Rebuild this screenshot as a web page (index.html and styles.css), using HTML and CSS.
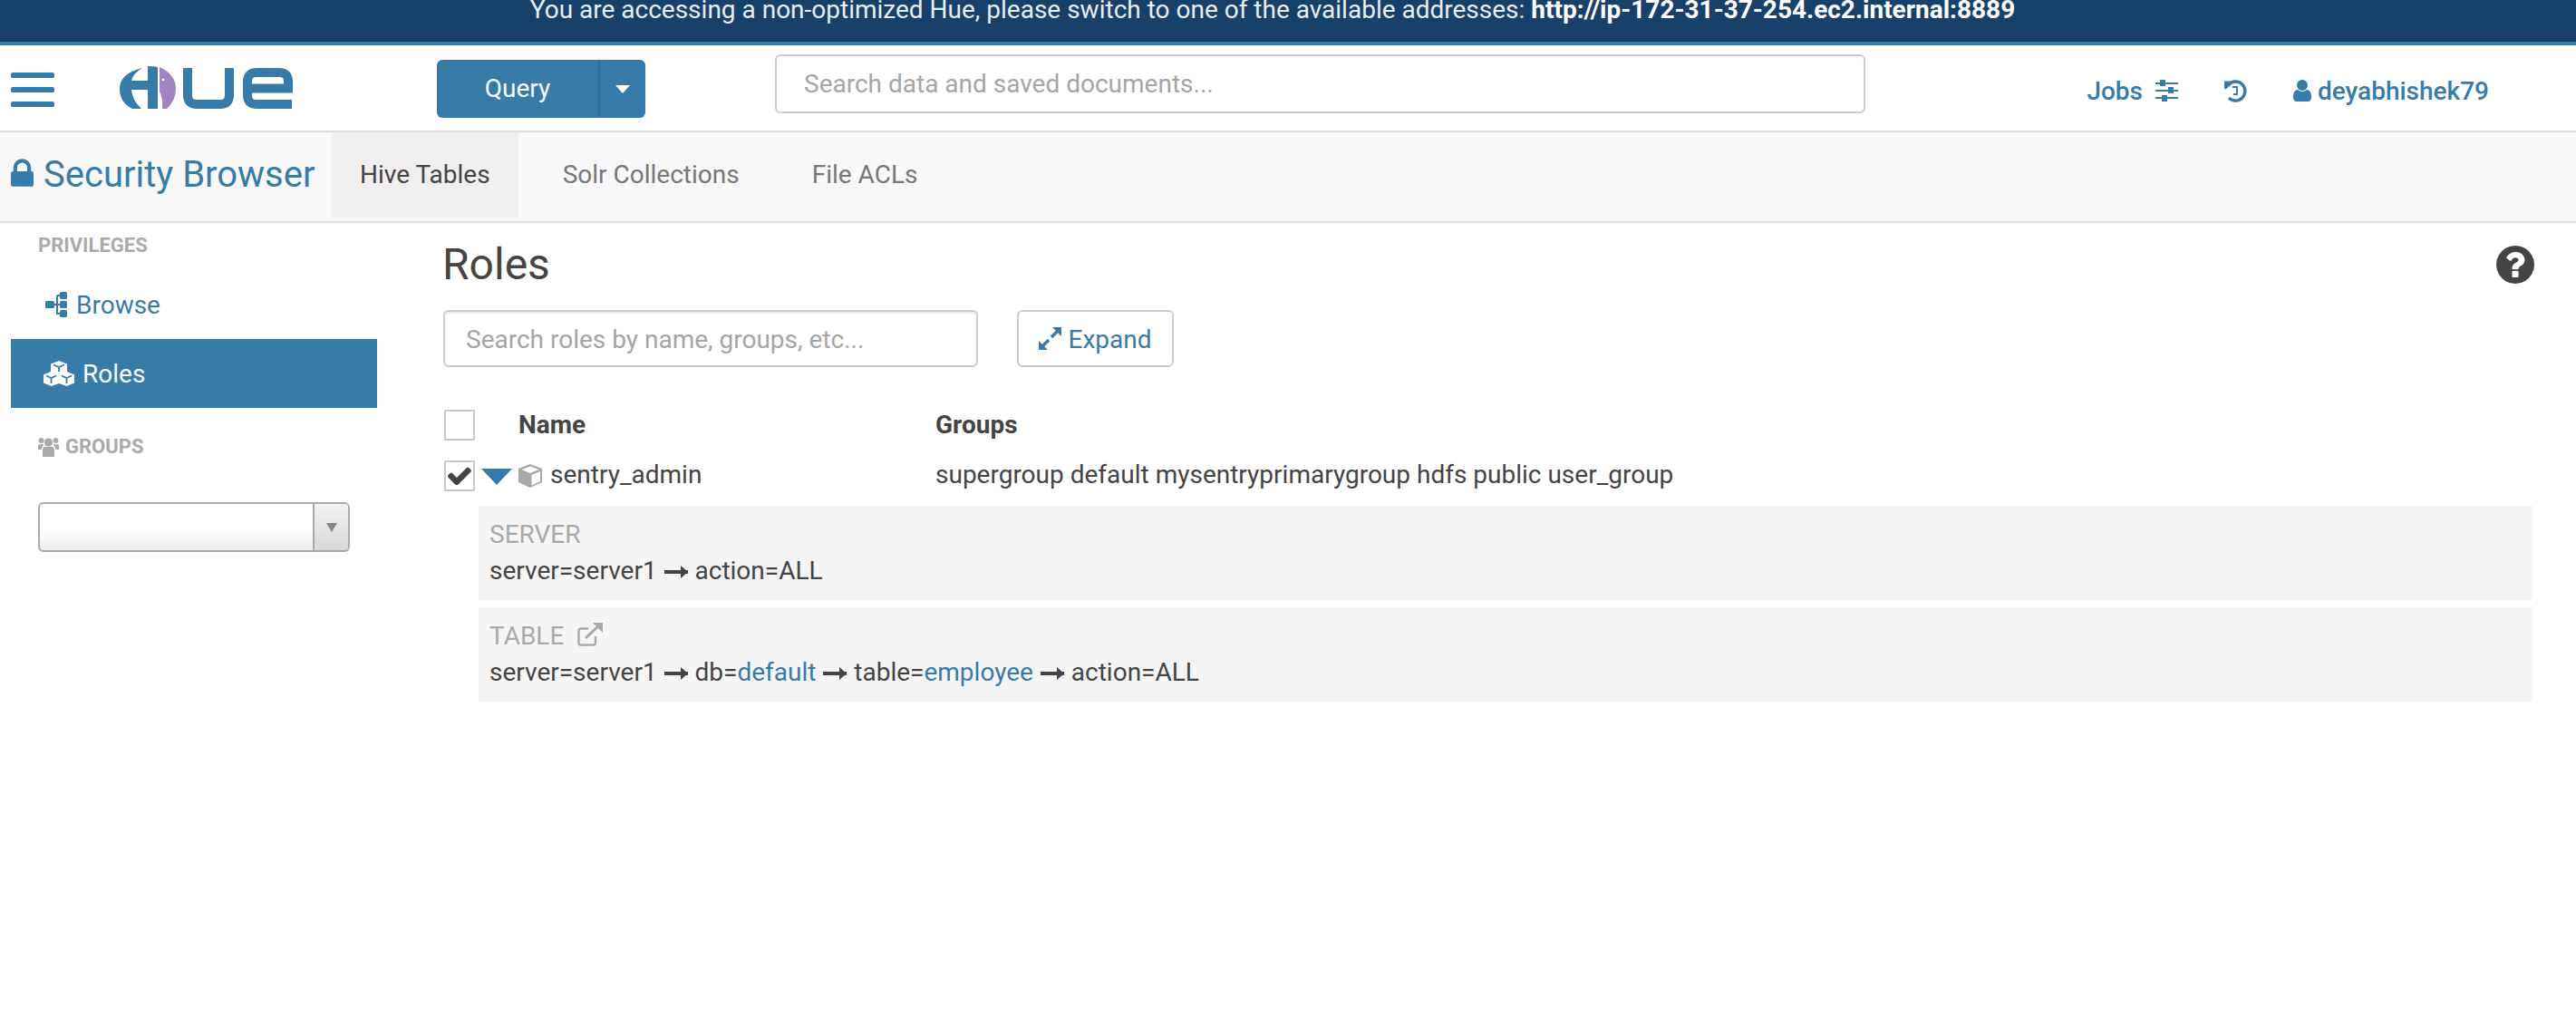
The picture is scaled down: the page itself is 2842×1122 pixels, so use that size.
FILE: index.html
```html
<!DOCTYPE html>
<html lang="en">
<head>
    <meta charset="UTF-8">
    <meta name="viewport" content="width=device-width, initial-scale=1.0">
    <title>Hue - Security Browser</title>
    <link rel="stylesheet" href="styles.css">
</head>
<body>
    <div class="banner">You are accessing a non-optimized Hue, please switch to one of the available addresses: <b>http://ip-172-31-37-254.ec2.internal:8889</b></div>

    <header class="topbar">
        <a class="burger"><span></span><span></span><span></span></a>
        <svg class="logo" viewBox="0 0 192 48">
            <path class="logo-blue" d="M25 2Q0 8 0 25Q0 40 14 47H24Q14 38 13 26H31V47H42V1Q36 0 31 0V16H13Q15 8 25 2Z"/>
            <path class="logo-purple" d="M44 1Q62 9 62 25Q62 38 52 47H47Q48 36 44 28Z"/>
            <circle class="logo-dot" cx="48" cy="15" r="1.4"/>
            <path class="logo-line" d="M75 2V32Q75 42 85 42H111Q121 42 121 32V2"/>
            <path class="logo-line" d="M136 24.5H186V17Q186 7 176 7H151Q141 7 141 17V32Q141 42 151 42H190"/>
        </svg>
        <div class="query-btn">
            <span class="query-label">Query</span>
            <span class="query-caret"><i></i></span>
        </div>
        <input class="global-search" type="text" placeholder="Search data and saved documents...">
        <div class="top-links">
            <a class="jobs">Jobs
                <svg class="ico-sliders" viewBox="0 0 25 24">
                    <path d="M0 4H25M0 12H25M0 20H25" stroke="#377ba8" stroke-width="2"/>
                    <path d="M5 0h6v7H5zM14 8h6v7h-6zM7 17h6v7H7z" fill="#377ba8"/>
                </svg>
            </a>
            <svg class="ico-history" viewBox="0 0 25 25">
                <path d="M4.5 5.5A10.5 10.500 0 1 1 5 20" fill="none" stroke="#377ba8" stroke-width="3.4"/>
                <path d="M0 1.5L9.5 1.5L9.5 3.5L2.5 10L0 10Z" fill="#377ba8"/>
                <path d="M9 8H14V16H10" fill="none" stroke="#377ba8" stroke-width="2"/>
            </svg>
            <a class="user">
                <svg class="ico-user" viewBox="256 128 1280 1536"><path d="M1536 1399q0 109-62.5 187t-150.5 78h-854q-88 0-150.5-78t-62.5-187q0-85 8.5-160.5t31.5-152 58.5-131 94-89 134.5-34.5q131 128 313 128t313-128q76 0 134.5 34.5t94 89 58.5 131 31.5 152 8.5 160.5zm-256-887q0 159-112.5 271.5t-271.5 112.5-271.5-112.5-112.5-271.5 112.5-271.5 271.5-112.5 271.5 112.5 112.5 271.5z"/></svg>
                deyabhishek79
            </a>
        </div>
    </header>

    <nav class="subnav">
        <svg class="ico-lock" viewBox="320 128 1152 1408"><path d="M640 768h512v-192q0-106-75-181t-181-75-181 75-75 181v192zm832 96v576q0 40-28 68t-68 28h-960q-40 0-68-28t-28-68v-576q0-40 28-68t68-28h32v-192q0-184 132-316t316-132 316 132 132 316v192h32q40 0 68 28t28 68z"/></svg>
        <a class="app-title">Security Browser</a>
        <a class="tab tab-active">Hive Tables</a>
        <a class="tab tab-solr">Solr Collections</a>
        <a class="tab tab-file">File ACLs</a>
    </nav>

    <div class="page">
        <aside class="sidebar">
            <div class="side-title">PRIVILEGES</div>
            <a class="side-link">
                <svg class="ico-sitemap" viewBox="0 0 24 28">
                    <path d="M8 14H16M13 4V24H18M13 4H18" fill="none" stroke="#377ba8" stroke-width="2"/>
                    <rect y="10" width="10" height="8" rx="1.5" fill="#377ba8"/>
                    <rect x="16" width="8" height="8" rx="1.5" fill="#377ba8"/>
                    <rect x="16" y="10" width="8" height="8" rx="1.5" fill="#377ba8"/>
                    <rect x="16" y="20" width="8" height="8" rx="1.5" fill="#377ba8"/>
                </svg>
                Browse
            </a>
            <a class="side-link side-active">
                <svg class="ico-cubes" viewBox="0 0 34 28">
                    <path d="M17 0L26 3.500V12L34 15.500V24.500L25.500 28L17 25L8.500 28L0 24.500V15.500L8 12V3.500Z" fill="#fff"/>
                    <path d="M11 4.500L17 7L23 4.500M17 7V12M3 16.500L8.500 19L14 16.500M8.500 19V25M20 16.500L25.500 19L31 16.500M25.500 19V25" fill="none" stroke="#377ba8" stroke-width="1.800"/>
                </svg>
                Roles
            </a>
            <div class="side-title side-groups">
                <svg class="ico-users" viewBox="0 0 23 22">
                    <circle cx="11.500" cy="6" r="4.500"/><circle cx="3.500" cy="4" r="3"/><circle cx="19.500" cy="4" r="3"/>
                    <path d="M5 22V15Q5 11 8 11H15Q18 11 18 15V22ZM0 14V10Q0 8 3 8H6L3.500 14ZM23 14V10Q23 8 20 8H17L19.500 14Z"/>
                </svg>
                GROUPS
            </div>
            <div class="group-select">
                <span class="select-arrow"><i></i></span>
            </div>
        </aside>

        <main class="content">
            <div class="title-row">
                <h1>Roles</h1>
                <svg class="ico-help" viewBox="128 128 1536 1536"><path d="M1024 1376v-192q0-14-9-23t-23-9h-192q-14 0-23 9t-9 23v192q0 14 9 23t23 9h192q14 0 23-9t9-23zm256-672q0-88-55.5-163t-138.5-116-170-41q-243 0-371 213-15 24 8 42l132 100q7 6 19 6 16 0 25-12 53-68 86-92 34-24 86-24 48 0 85.5 26t37.5 59q0 38-20 61t-68 45q-63 28-115.5 86.5t-52.5 125.5v36q0 14 9 23t23 9h192q14 0 23-9t9-23q0-19 21.5-49.5t54.5-49.5q32-18 49-28.5t46-35 44.5-48 28-60.5 12.5-81zm384 192q0 209-103 385.500t-279.500 279.500-385.500 103-385.500-103-279.500-279.500-103-385.500 103-385.500 279.500-279.500 385.500-103 385.500 103 279.500 279.500 103 385.500z"/></svg>
            </div>

            <div class="toolbar">
                <input class="role-search" type="text" placeholder="Search roles by name, groups, etc...">
                <a class="expand-btn">
                    <svg class="ico-expand" viewBox="0 0 25 25">
                        <path d="M3 22L11 14M14 11L22 3" stroke="#377ba8" stroke-width="3.400"/>
                        <path d="M15 0H25V10ZM0 25V15L10 25Z" fill="#377ba8"/>
                    </svg>
                    <span class="expand-label">Expand</span>
                </a>
            </div>

            <div class="role-row role-head">
                <span class="check"></span>
                <span class="col-name">Name</span>
                <span class="col-groups">Groups</span>
            </div>
            <div class="role-row role-item">
                <span class="check">
                    <svg class="ico-check" viewBox="128 350 1543 1100"><path d="M1671 566q0 40-28 68l-724 724-136 136q-28 28-68 28t-68-28l-136-136-362-362q-28-28-28-68t28-68l136-136q28-28 68-28t68 28l294 295 656-657q28-28 68-28t68 28l136 136q28 28 28 68z"/></svg>
                </span>
                <i class="row-caret"></i>
                <svg class="ico-cube" viewBox="0 0 26 26">
                    <path d="M13 0L26 5V20L13 26L0 20V5Z" fill="#a9a9a9"/>
                    <path d="M13 2.500L22.500 6L13 10L3.500 6Z" fill="#fff"/>
                    <path d="M14.500 12L24 8V19L14.500 23.500Z" fill="#fff"/>
                </svg>
                <span class="role-name">sentry_admin</span>
                <span class="col-groups">supergroup default mysentryprimarygroup hdfs public user_group</span>
            </div>

            <div class="priv">
                <div class="priv-type">SERVER</div>
                <div class="priv-line">server=server1 <i class="arrow"></i> action=ALL</div>
            </div>
            <div class="priv">
                <div class="priv-type">TABLE
                    <svg class="ico-external" viewBox="0 0 28 26">
                        <path d="M20 15V22Q20 24.500 17 24.500H4Q1.500 24.500 1.500 22V9Q1.500 6.500 4 6.500H12" fill="none" stroke="#aaa" stroke-width="2.400"/>
                        <path d="M9 17L24 3" stroke="#aaa" stroke-width="3"/>
                        <path d="M17 0H28V11Z" fill="#aaa"/>
                    </svg>
                </div>
                <div class="priv-line">server=server1 <i class="arrow"></i> db=<a>default</a> <i class="arrow"></i> table=<a>employee</a> <i class="arrow"></i> action=ALL</div>
            </div>
        </main>
    </div>
</body>
</html>
```

FILE: styles.css
```css
/* Global Styles */
html, body {
    margin: 0;
    padding: 0;
    background-color: #fff;
}

body {
    font-family: Roboto, "Liberation Sans", sans-serif;
    font-size: 28px;
    color: #444;
    height: 1122px;
    overflow: hidden;
}

a {
    color: #377ba8;
    text-decoration: none;
}

input {
    font-family: inherit;
    font-size: 28px;
    color: #444;
    box-sizing: border-box;
    background-color: #fff;
    border: 2px solid #ccc;
    border-radius: 6px;
    padding: 0 24px;
    outline: none;
}

input::placeholder {
    color: #a5a5a5;
    opacity: 1;
}

/* Banner */
.banner {
    box-sizing: border-box;
    height: 50px;
    padding-right: 34px;
    background-color: #17406b;
    border-bottom: 4px solid #377ba8;
    color: #e8eef3;
    font-size: 28px;
    line-height: 22px;
    text-align: center;
}

.banner b {
    color: #fff;
    font-weight: 700;
}

/* Top bar */
.topbar {
    display: flex;
    align-items: center;
    height: 96px;
    box-sizing: border-box;
    border-bottom: 2px solid #ddd;
}

.burger {
    display: flex;
    flex-direction: column;
    gap: 10px;
    width: 48px;
    margin-left: 12px;
    margin-top: 4px;
}

.burger span {
    height: 6px;
    border-radius: 2px;
    background-color: #377ba8;
}

.logo {
    width: 192px;
    height: 48px;
    margin-left: 72px;
}

.logo-blue { fill: #377ba8; }
.logo-purple { fill: #a184c0; }
.logo-dot { fill: #fff; }
.logo-line { fill: none; stroke: #377ba8; stroke-width: 10; }

.query-btn {
    display: flex;
    width: 230px;
    height: 64px;
    margin-left: 158px;
    margin-top: 2px;
    background-color: #377ba8;
    border-radius: 6px;
    color: #fff;
}

.query-label {
    flex: 1;
    text-align: center;
    line-height: 64px;
}

.query-caret {
    width: 50px;
    border-left: 2px solid #2f6d96;
    display: flex;
    align-items: center;
    justify-content: center;
}

.query-caret i {
    border-left: 8px solid transparent;
    border-right: 8px solid transparent;
    border-top: 9px solid #fff;
}

.global-search {
    width: 1203px;
    height: 65px;
    margin-left: 143px;
    margin-bottom: 9px;
    padding: 0 30px;
}

.top-links {
    display: flex;
    align-items: center;
    margin-left: auto;
    margin-right: 96px;
    margin-top: 6px;
    font-weight: 500;
}

.jobs {
    display: flex;
    align-items: center;
    gap: 14px;
    margin-right: 51px;
}

.user {
    display: flex;
    align-items: center;
    gap: 7px;
    margin-left: 51px;
}

.ico-sliders { width: 25px; height: 24px; }
.ico-history { width: 25px; height: 25px; }
.ico-user { width: 20px; height: 24px; fill: #377ba8; }

/* Sub navigation */
.subnav {
    display: flex;
    height: 100px;
    box-sizing: border-box;
    padding-left: 12px;
    background-color: #f8f8f8;
    border-bottom: 2px solid #ddd;
}

.ico-lock {
    width: 25px;
    height: 31px;
    fill: #377ba8;
    margin-top: 29px;
}

.app-title {
    margin-left: 11px;
    width: 318px;
    font-size: 40px;
    line-height: 94px;
    white-space: nowrap;
}

.tab {
    line-height: 94px;
    color: #777;
    height: 94px;
    white-space: nowrap;
}

.tab-active {
    color: #444;
    background-color: #f0eeef;
    padding: 0 31px;
}

.tab-solr { margin-left: 49px; }
.tab-file { margin-left: 80px; }

/* Page */
.page {
    display: flex;
}

.sidebar {
    width: 489px;
    flex-shrink: 0;
}

.side-title {
    margin: 13px 0 15px 42px;
    font-size: 22px;
    line-height: 24px;
    font-weight: 700;
    color: #aaa;
    display: flex;
    align-items: center;
    gap: 7px;
}

.side-link {
    display: flex;
    align-items: center;
    box-sizing: border-box;
    width: 404px;
    height: 76px;
    margin-left: 12px;
    padding-left: 38px;
    gap: 10px;
}

.side-active {
    background-color: #377ba8;
    color: #fff;
    padding-left: 36px;
    gap: 9px;
}

.side-groups {
    margin-top: 31px;
    margin-bottom: 49px;
}

.ico-sitemap { width: 24px; height: 28px; }
.ico-cubes { width: 34px; height: 28px; }
.ico-users { width: 23px; height: 22px; fill: #aaa; }

.group-select {
    display: flex;
    justify-content: flex-end;
    box-sizing: border-box;
    width: 344px;
    height: 55px;
    margin-left: 42px;
    border: 2px solid #aaa;
    border-radius: 6px;
    background: linear-gradient(#fff 55%, #ececec);
}

.select-arrow {
    display: flex;
    align-items: center;
    justify-content: center;
    width: 37px;
    border-left: 2px solid #aaa;
    background: linear-gradient(#f2f2f2, #d8d8d8);
    border-radius: 0 4px 4px 0;
}

.select-arrow i {
    border-left: 6px solid transparent;
    border-right: 6px solid transparent;
    border-top: 10px solid #888;
}

.content {
    flex: 1;
    padding: 18px 48px 0 0;
}

.title-row {
    display: flex;
    justify-content: space-between;
    align-items: center;
    height: 56px;
}

.content h1 {
    margin: 0 0 0 -1px;
    font-size: 48px;
    font-weight: 400;
    line-height: 58px;
}

.ico-help {
    width: 42px;
    height: 42px;
    fill: #444;
    margin-right: -2px;
}

.toolbar {
    display: flex;
    gap: 43px;
    margin-top: 22px;
}

.role-search {
    width: 590px;
    height: 63px;
    padding: 2px 23px 0;
    box-shadow: inset 0 2px 2px rgba(0,0,0,0.08);
}

.expand-btn {
    display: flex;
    align-items: center;
    justify-content: center;
    gap: 7px;
    box-sizing: border-box;
    width: 173px;
    height: 63px;
    border: 2px solid #ccc;
    border-radius: 6px;
}

.expand-label {
    padding-top: 2px;
}

.ico-expand { width: 25px; height: 25px; }

.role-row {
    display: flex;
    align-items: center;
    height: 34px;
    padding-left: 1px;
}

.role-head {
    margin-top: 47px;
    font-weight: 700;
}

.role-head .col-name,
.role-head .col-groups {
    margin-bottom: 1px;
}

.role-item {
    margin-top: 22px;
}

.check {
    display: flex;
    align-items: center;
    justify-content: center;
    box-sizing: border-box;
    width: 34px;
    height: 34px;
    border: 2px solid #ccc;
    flex-shrink: 0;
}

.ico-check { width: 26px; height: 20px; fill: #444; }

.col-name {
    margin-left: 48px;
    width: 460px;
}

.col-groups {
    white-space: nowrap;
}

.row-caret {
    margin-left: 7px;
    border-left: 17px solid transparent;
    border-right: 17px solid transparent;
    border-top: 18px solid #377ba8;
    margin-top: 2px;
}

.ico-cube {
    width: 26px;
    height: 26px;
    margin-left: 7px;
}

.role-name {
    margin-left: 9px;
    width: 425px;
    margin-bottom: 3px;
}

.role-item .col-groups {
    margin-bottom: 3px;
}

.priv {
    box-sizing: border-box;
    height: 104px;
    margin: 8px 0 0 39px;
    padding: 11px 12px 0;
    background-color: #f5f5f5;
    line-height: 42px;
}

.role-item + .priv {
    margin-top: 16px;
}

.priv-type {
    color: #aaa;
    display: flex;
    align-items: center;
    gap: 15px;
}

.ico-external { width: 28px; height: 26px; margin-top: -4px; }

.priv-line {
    white-space: nowrap;
    margin-top: -2px;
}

/* Long arrow between the privilege parts */
.arrow {
    display: inline-block;
    position: relative;
    width: 26px;
    height: 4px;
    margin: 0 1px;
    vertical-align: 6px;
    background-color: #444;
}

.arrow::after {
    content: "";
    position: absolute;
    right: 0;
    top: -5px;
    border-left: 8px solid #444;
    border-top: 7px solid transparent;
    border-bottom: 7px solid transparent;
}
```
